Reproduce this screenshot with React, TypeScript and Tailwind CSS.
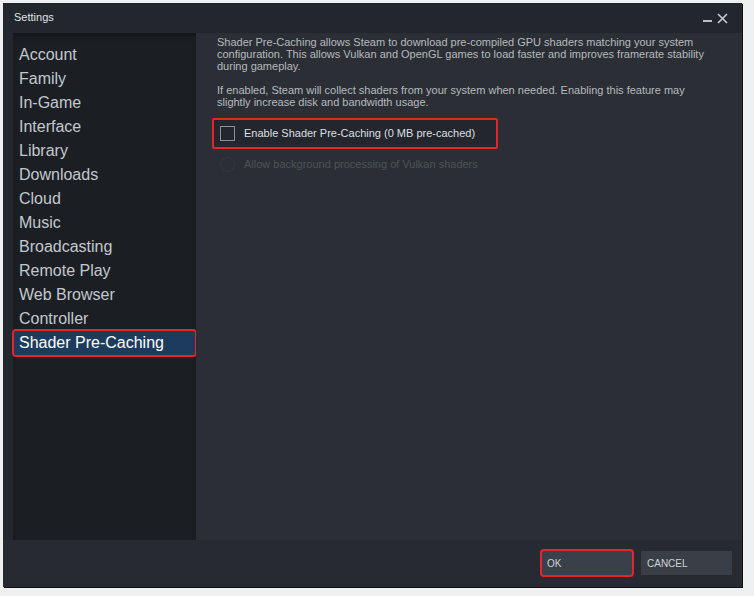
import React from "react";

const navItems = [
  "Account",
  "Family",
  "In-Game",
  "Interface",
  "Library",
  "Downloads",
  "Cloud",
  "Music",
  "Broadcasting",
  "Remote Play",
  "Web Browser",
  "Controller",
  "Shader Pre-Caching",
];

const font = { fontFamily: '"Liberation Sans", Arial, sans-serif' };

export default function App() {
  return (
    <div className="h-[596px] w-[754px] bg-[#eef0f2] pl-[3px] pt-[3px]" style={font}>
      <div className="flex h-[584px] w-[739px] flex-col bg-[#23262c] shadow-[1px_1px_0_#111]">
        {/* title bar */}
        <div className="flex h-[30px] items-center justify-between pl-[11px] pr-[14px]">
          <span className="mt-[-1px] text-[11px] text-[#dfe3e6]">Settings</span>
          <div className="flex items-center gap-[5px] text-[#b9bec4]">
            <span className="mt-[6px] block h-[2px] w-[9px] bg-[#b9bec4]" />
            <svg width="11" height="11" viewBox="0 0 11 11">
              <path d="M1 1L10 10M10 1L1 10" stroke="#c7ccd1" strokeWidth="1.6" />
            </svg>
          </div>
        </div>

        <div className="flex flex-1">
          {/* sidebar */}
          <div className="ml-[10px] flex w-[183px] flex-col bg-[#1b1f24] pt-[10px] shadow-[inset_0_6px_6px_-3px_rgba(0,0,0,0.35)]">
            {navItems.map((item) => {
              const active = item === "Shader Pre-Caching";
              return (
                <div
                  key={item}
                  className={
                    active
                      ? "mx-px h-[24px] rounded-[2px] bg-[#1d3b5c] pl-[5px] text-[16px] leading-[24px] text-white outline-2 outline-[#e5242b]"
                      : "h-[24px] pl-[6px] text-[16px] leading-[24px] text-[#c3c8cd]"
                  }
                >
                  {item}
                </div>
              );
            })}
          </div>

          {/* content */}
          <div className="flex-1 bg-[#2b2f35] pl-[21px] pt-[3px]">
            <p className="whitespace-nowrap text-[11px] leading-[12px] text-[#b6babe]">
              Shader Pre-Caching allows Steam to download pre-compiled GPU shaders matching your system
              <br />
              configuration. This allows Vulkan and OpenGL games to load faster and improves framerate stability
              <br />
              during gameplay.
            </p>
            <p className="mt-[12px] whitespace-nowrap text-[11px] leading-[12px] text-[#b6babe]">
              If enabled, Steam will collect shaders from your system when needed. Enabling this feature may
              <br />
              slightly increase disk and bandwidth usage.
            </p>

            <div className="ml-[-5px] mt-[10px] flex h-[31px] w-[286px] items-center gap-[9px] rounded-[2px] border-2 border-[#e5242b] bg-[#23272d] pl-[6px]">
              <span className="block h-[15px] w-[15px] border border-[#8a9097]" />
              <span className="text-[11px] text-[#dcdfe2]">Enable Shader Pre-Caching (0 MB pre-cached)</span>
            </div>

            <div className="mt-[5px] flex h-[20px] items-center gap-[9px] pl-[3px]">
              <span className="block h-[15px] w-[15px] rounded-full border border-[#353a40]" />
              <span className="text-[11px] text-[#4d5258]">Allow background processing of Vulkan shaders</span>
            </div>
          </div>
        </div>

        {/* footer */}
        <div className="flex h-[47px] items-center justify-end gap-[9px] bg-[#272b31] pb-[1px] pr-[10px]">
          <div className="rounded-[2px] outline-2 outline-[#e5242b]">
            <div className="flex h-[24px] w-[90px] items-center bg-[#3a4049] pl-[5px] text-[10px] text-[#cfd3d7]">
              OK
            </div>
          </div>
          <div className="flex h-[24px] w-[91px] items-center bg-[#3a3f47] pl-[6px] text-[10px] text-[#cfd3d7]">
            CANCEL
          </div>
        </div>
      </div>
    </div>
  );
}
